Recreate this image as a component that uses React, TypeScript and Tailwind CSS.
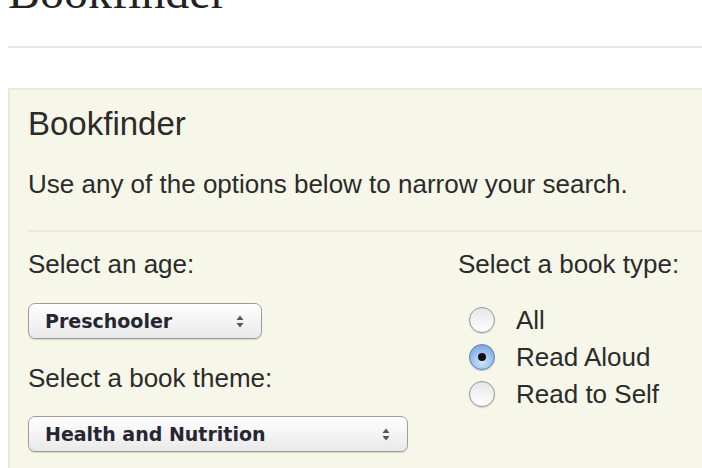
import React from "react";

function Arrows() {
  return (
    <svg width="8" height="13" viewBox="0 0 8 13" className="shrink-0">
      <path d="M4 0.5 L7.5 5 L0.5 5 Z" fill="#555" />
      <path d="M4 12.5 L7.5 8 L0.5 8 Z" fill="#555" />
    </svg>
  );
}

function FakeSelect({ label, width }: { label: string; width: string }) {
  return (
    <div
      className={`${width} h-[36px] flex items-center justify-between pl-[16px] pr-[17px] rounded-[7px] border border-[#9d9d9d] bg-gradient-to-b from-white to-[#e9e9e9] shadow-[0_1px_1px_rgba(0,0,0,0.15)]`}
    >
      <span className="font-['DejaVu_Sans',sans-serif] font-bold text-[19px] text-[#262633] leading-none">
        {label}
      </span>
      <Arrows />
    </div>
  );
}

function Radio({ label, checked }: { label: string; checked?: boolean }) {
  return (
    <div className="h-[37px] flex items-center">
      <div className="ml-[10px] w-[28px] flex justify-center">
        {checked ? (
          <div className="w-[26px] h-[26px] rounded-full border border-[#5b7fb8] bg-[radial-gradient(circle_at_50%_70%,#d2e6fb_0%,#8fb8ec_60%,#6f9adb_100%)] flex items-center justify-center shadow-[0_1px_1px_rgba(0,0,0,0.2)]">
            <div className="w-[8px] h-[8px] rounded-full bg-[#111]" />
          </div>
        ) : (
          <div className="w-[26px] h-[26px] rounded-full border border-[#949494] bg-gradient-to-b from-[#e6e6e6] to-white shadow-[0_1px_1px_rgba(0,0,0,0.15)]" />
        )}
      </div>
      <span className="ml-[20px] text-[26px] leading-[30px] text-[#2b2b2b]">{label}</span>
    </div>
  );
}

export default function App() {
  return (
    <div className="w-[702px] h-[468px] overflow-hidden bg-white font-['Liberation_Sans',Arial,sans-serif]">
      <div className="pl-[8px]">
        <h1 className="mt-[-32px] h-[48px] text-[48px] leading-[48px] font-['Liberation_Serif',serif] text-[#222]">
          Bookfinder
        </h1>
        <div className="mt-[30px] h-[2px] bg-[#e6e6e6]" />
        <div className="mt-[40px] border-2 border-r-0 border-[#e9e9dc] bg-[#f7f7e9] pl-[18px] pt-[14px] pb-[40px]">
          <h2 className="text-[33px] leading-[40px] text-[#2b2b2b]">Bookfinder</h2>
          <p className="mt-[25px] text-[26px] leading-[31px] text-[#2b2b2b]">
            Use any of the options below to narrow your search.
          </p>
          <div className="mt-[30px] h-[2px] bg-[#e9e9dc]" />
          <div className="mt-[17px] flex">
            <div className="w-[430px] shrink-0">
              <div className="text-[26px] leading-[31px] text-[#2b2b2b]">Select an age:</div>
              <div className="mt-[23px]">
                <FakeSelect label="Preschooler" width="w-[234px]" />
              </div>
              <div className="mt-[24px] text-[26px] leading-[31px] text-[#2b2b2b]">
                Select a book theme:
              </div>
              <div className="mt-[22px]">
                <FakeSelect label="Health and Nutrition" width="w-[380px]" />
              </div>
            </div>
            <div className="flex-1">
              <div className="text-[26px] leading-[31px] text-[#2b2b2b] whitespace-nowrap">
                Select a book type:
              </div>
              <div className="mt-[21px] flex flex-col">
                <Radio label="All" />
                <Radio label="Read Aloud" checked />
                <Radio label="Read to Self" />
              </div>
            </div>
          </div>
        </div>
      </div>
    </div>
  );
}
